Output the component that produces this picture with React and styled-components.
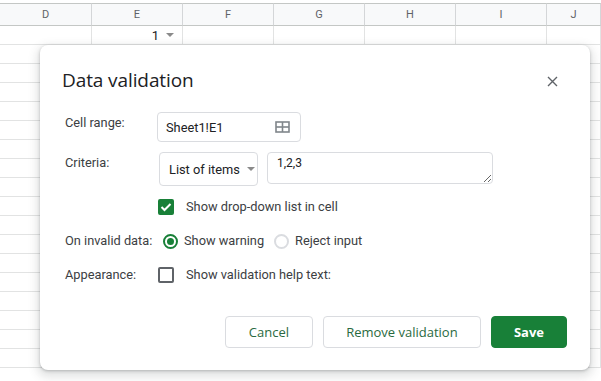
import React from "react";
import styled, { createGlobalStyle } from "styled-components";

const Global = createGlobalStyle`
  html, body { margin: 0; padding: 0; background: #fff; }
  body { font-family: Roboto, "Noto Sans", Arial, sans-serif; overflow: hidden; }
  * { box-sizing: border-box; }
`;

const Page = styled.div`
  position: relative;
  width: 601px;
  height: 381px;
  overflow: hidden;
  background: #fff;
  padding-top: 3px;
`;

const Sheet = styled.div`
  display: grid;
  grid-template-columns: 92px repeat(5, 91px) 1fr;
`;

const HeadCell = styled.div`
  height: 23px;
  background: #f8f9fa;
  border-top: 1px solid #c4c7c5;
  border-bottom: 1px solid #c4c7c5;
  border-right: 1px solid #d4d6d8;
  color: #5f6368;
  font-size: 11px;
  display: flex;
  align-items: center;
  justify-content: center;
`;

const Cell = styled.div`
  height: 19px;
  border-bottom: 1px solid #e2e3e3;
  border-right: 1px solid #e2e3e3;
  display: flex;
  align-items: center;
  justify-content: flex-end;
  padding-right: 8px;
  gap: 7px;
  font-size: 13px;
  color: #202124;
`;

const Caret = styled.span`
  width: 0;
  height: 0;
  border-left: 4px solid transparent;
  border-right: 4px solid transparent;
  border-top: 4px solid #8a8a8a;
`;

const Dialog = styled.div`
  position: absolute;
  left: 40px;
  top: 45px;
  width: 550px;
  height: 325px;
  background: #fff;
  border-radius: 8px;
  box-shadow: 0 1px 3px rgba(60, 64, 67, 0.3), 0 4px 10px 3px rgba(60, 64, 67, 0.15);
  padding: 23px 23px 22px 22px;
  display: flex;
  flex-direction: column;
`;

const TitleRow = styled.div`
  display: flex;
  align-items: center;
  justify-content: space-between;
  height: 24px;
`;

const Title = styled.h1`
  margin: 0;
  font-family: "Open Sans", Roboto, sans-serif;
  font-weight: 400;
  font-size: 19px;
  letter-spacing: -0.1px;
  color: #202124;
`;

const CloseBtn = styled.div`
  width: 24px;
  height: 24px;
  margin-right: 3px;
  margin-top: 2px;
  display: flex;
  align-items: center;
  justify-content: center;
`;

const Form = styled.div`
  display: grid;
  grid-template-columns: 92px 1fr;
  align-items: start;
  padding-left: 3px;
  margin-top: 20px;
`;

const Label = styled.div`
  font-size: 12.8px;
  color: #3c4043;
  line-height: 16px;
  padding-top: ${(p) => p.$top || 0}px;
  margin-top: ${(p) => p.$mt || 0}px;
`;

const Field = styled.div`
  display: flex;
  align-items: ${(p) => p.$align || "flex-start"};
  gap: ${(p) => p.$gap || 10}px;
  margin-top: ${(p) => p.$mt || 0}px;
  margin-left: ${(p) => p.$ml || 0}px;
`;

const RangeBox = styled.div`
  width: 144px;
  height: 30px;
  border: 1px solid #dadce0;
  border-radius: 4px;
  display: flex;
  align-items: center;
  justify-content: space-between;
  padding: 0 10px 0 8px;
  font-size: 12.8px;
  color: #202124;
`;

const Select = styled.div`
  width: 99px;
  height: 34px;
  margin-left: 2px;
  border: 1px solid #dadce0;
  border-radius: 4px;
  display: flex;
  align-items: center;
  padding-left: 9px;
  gap: 7px;
  font-size: 12.8px;
  color: #202124;
`;

const Text = styled.textarea`
  width: 226px;
  height: 32px;
  border: 1px solid #dadce0;
  border-radius: 4px;
  padding: 3px 9px;
  font-family: Roboto, Arial, sans-serif;
  font-size: 12px;
  color: #202124;
  outline: none;
  resize: both;
`;

const Check = styled.span`
  width: 16px;
  height: 16px;
  border-radius: 2px;
  flex: none;
  display: flex;
  align-items: center;
  justify-content: center;
  background: ${(p) => (p.$on ? "#188038" : "#fff")};
  border: 2px solid ${(p) => (p.$on ? "#188038" : "#5f6368")};
`;

const OptText = styled.span`
  font-size: 12.8px;
  color: #3c4043;
  line-height: 16px;
`;

const Radio = styled.span`
  width: 15px;
  height: 15px;
  border-radius: 50%;
  flex: none;
  border: 2px solid ${(p) => (p.$on ? "#188038" : "#dadce0")};
  display: flex;
  align-items: center;
  justify-content: center;
  &::after {
    content: "";
    width: 7px;
    height: 7px;
    border-radius: 50%;
    background: ${(p) => (p.$on ? "#188038" : "transparent")};
  }
`;

const RadioOpt = styled.label`
  display: flex;
  align-items: center;
  gap: 6px;
`;

const Footer = styled.div`
  margin-top: auto;
  display: flex;
  justify-content: flex-end;
  gap: 10px;
`;

const Button = styled.button`
  height: 32px;
  padding: 0 ${(p) => p.$px || 22}px;
  min-width: ${(p) => p.$w || 0}px;
  border-radius: 4px;
  font-family: "Open Sans", Roboto, sans-serif;
  font-size: 13px;
  font-weight: ${(p) => (p.$primary ? 700 : 500)};
  color: ${(p) => (p.$primary ? "#fff" : "#2a6a41")};
  background: ${(p) => (p.$primary ? "#188038" : "#fff")};
  border: 1px solid ${(p) => (p.$primary ? "#188038" : "#dadce0")};
`;

const columns = ["D", "E", "F", "G", "H", "I", "J"];
const rowCount = 18;

function GridIcon() {
  return (
    <svg width="15" height="12" viewBox="0 0 15 12">
      <rect x="1" y="1" width="13" height="10" fill="none" stroke="#80868b" strokeWidth="1.6" />
      <line x1="7.5" y1="1" x2="7.5" y2="11" stroke="#80868b" strokeWidth="1.6" />
      <line x1="1" y1="6" x2="14" y2="6" stroke="#80868b" strokeWidth="1.6" />
    </svg>
  );
}

export default function App() {
  return (
    <>
      <Global />
      <Page>
        <Sheet>
          {columns.map((c) => (
            <HeadCell key={c}>{c}</HeadCell>
          ))}
          {Array.from({ length: rowCount }).map((_, r) =>
            columns.map((c) => (
              <Cell key={c + r}>
                {r === 0 && c === "E" ? (
                  <>
                    <span>1</span>
                    <Caret />
                  </>
                ) : null}
              </Cell>
            ))
          )}
        </Sheet>

        <Dialog>
          <TitleRow>
            <Title>Data validation</Title>
            <CloseBtn>
              <svg width="11" height="11" viewBox="0 0 11 11">
                <path d="M1 1 L10 10 M10 1 L1 10" stroke="#5f6368" strokeWidth="1.4" />
              </svg>
            </CloseBtn>
          </TitleRow>

          <Form>
            <Label $top={3}>Cell range:</Label>
            <Field>
              <RangeBox>
                <span>Sheet1!E1</span>
                <GridIcon />
              </RangeBox>
            </Field>

            <Label $top={3} $mt={10}>Criteria:</Label>
            <Field $mt={10} $gap={9}>
              <Select>
                <span>List of items</span>
                <Caret />
              </Select>
              <Text readOnly defaultValue="1,2,3" />
            </Field>

            <div />
            <Field $mt={13} $gap={12} $ml={1} $align="center">
              <Check $on>
                <svg width="12" height="10" viewBox="0 0 12 10">
                  <path d="M1.5 5 L4.5 8 L10.5 2" fill="none" stroke="#fff" strokeWidth="2" />
                </svg>
              </Check>
              <OptText>Show drop-down list in cell</OptText>
            </Field>

            <Label $mt={18}>On invalid data:</Label>
            <Field $mt={18} $gap={10} $ml={6} $align="center">
              <RadioOpt>
                <Radio $on />
                <OptText>Show warning</OptText>
              </RadioOpt>
              <RadioOpt>
                <Radio />
                <OptText>Reject input</OptText>
              </RadioOpt>
            </Field>

            <Label $mt={18}>Appearance:</Label>
            <Field $mt={18} $gap={12} $ml={1} $align="center">
              <Check />
              <OptText>Show validation help text:</OptText>
            </Field>
          </Form>

          <Footer>
            <Button $w={88}>Cancel</Button>
            <Button $w={158}>Remove validation</Button>
            <Button $primary $w={75}>Save</Button>
          </Footer>
        </Dialog>
      </Page>
    </>
  );
}
